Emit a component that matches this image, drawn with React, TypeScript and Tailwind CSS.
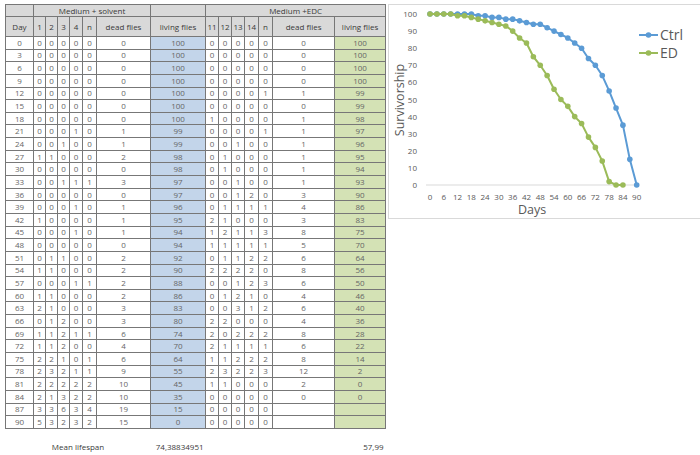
const rows = [
  '0 0 0 0 0 0 0 100 0 0 0 0 0 0 100',
  '3 0 0 0 0 0 0 100 0 0 0 0 0 0 100',
  '6 0 0 0 0 0 0 100 0 0 0 0 0 0 100',
  '9 0 0 0 0 0 0 100 0 0 0 0 0 0 100',
  '12 0 0 0 0 0 0 100 0 0 0 0 1 1 99',
  '15 0 0 0 0 0 0 100 0 0 0 0 0 0 99',
  '18 0 0 0 0 0 0 100 1 0 0 0 0 1 98',
  '21 0 0 0 1 0 1 99 0 0 0 0 1 1 97',
  '24 0 0 1 0 0 1 99 0 0 1 0 0 1 96',
  '27 1 1 0 0 0 2 98 0 1 0 0 0 1 95',
  '30 0 0 0 0 0 0 98 0 1 0 0 0 1 94',
  '33 0 0 1 1 1 3 97 0 0 1 0 0 1 93',
  '36 0 0 0 0 0 0 97 0 0 1 2 0 3 90',
  '39 0 0 0 1 0 1 96 0 1 1 1 1 4 86',
  '42 1 0 0 0 0 1 95 2 1 0 0 0 3 83',
  '45 0 0 0 1 0 1 94 1 2 1 1 3 8 75',
  '48 0 0 0 0 0 0 94 1 1 1 1 1 5 70',
  '51 0 1 1 0 0 2 92 0 1 1 2 2 6 64',
  '54 1 1 0 0 0 2 90 2 2 2 2 0 8 56',
  '57 0 0 0 1 1 2 88 0 0 1 2 3 6 50',
  '60 1 1 0 0 0 2 86 0 1 2 1 0 4 46',
  '63 2 1 0 0 0 3 83 0 0 3 1 2 6 40',
  '66 0 1 2 0 0 3 80 2 2 0 0 0 4 36',
  '69 1 1 2 1 1 6 74 2 0 2 2 2 8 28',
  '72 1 1 2 0 0 4 70 2 1 1 1 1 6 22',
  '75 2 2 1 0 1 6 64 1 1 2 2 2 8 14',
  '78 2 3 2 1 1 9 55 2 3 2 2 3 12 2',
  '81 2 2 2 2 2 10 45 1 1 0 0 0 2 0',
  '84 2 1 3 2 2 10 35 0 0 0 0 0 0 0',
  '87 3 3 6 3 4 19 15 0 0 0 0 0 - -',
  '90 5 3 2 3 2 15 0 0 0 0 0 0 - -',
].map((r) => r.split(' ').map((v) => (v === '-' ? '' : v)));

const ctrl = rows.map((r) => [Number(r[0]), Number(r[7])]);
const ed = rows.filter((r) => r[14] !== '').map((r) => [Number(r[0]), Number(r[14])]);

const px = (d: number) => 41 + d * 2.2967;
const py = (v: number) => 180 - v * 1.71;

const cell = 'border border-[#777777] p-0 text-center leading-none';
const head = `${cell} bg-[#d9d9d9] text-[#3a3a3a]`;

function Series({ data, color }: { data: number[][]; color: string }) {
  const pts = data.map(([d, v]) => `${px(d)},${py(v)}`).join(' ');
  return (
    <g>
      <polyline points={pts} fill="none" stroke={color} strokeWidth="2" strokeLinejoin="round" />
      {data.map(([d, v]) => (
        <circle key={d} cx={px(d)} cy={py(v)} r="2.8" fill={color} />
      ))}
    </g>
  );
}

function Chart() {
  return (
    <div className="ml-[2px] w-[313px] h-[215px] border border-[#d9d9d9] bg-white">
      <svg width="311" height="213" className="font-['Open_Sans',sans-serif]">
        {[0, 10, 20, 30, 40, 50, 60, 70, 80, 90, 100].map((v) => (
          <text key={v} x="28" y={py(v) + 3} textAnchor="end" fontSize="8" fill="#595959">
            {v}
          </text>
        ))}
        <line x1="37" y1="180" x2="250" y2="180" stroke="#d9d9d9" strokeWidth="1" />
        {[0, 6, 12, 18, 24, 30, 36, 42, 48, 54, 60, 66, 72, 78, 84, 90].map((d) => (
          <text key={d} x={px(d)} y="195" textAnchor="middle" fontSize="8" fill="#595959">
            {d}
          </text>
        ))}
        <text x="143" y="209" textAnchor="middle" fontSize="12.5" fill="#595959">
          Days
        </text>
        <text
          x="0"
          y="0"
          transform="translate(15 95) rotate(-90)"
          textAnchor="middle"
          fontSize="12.5"
          fill="#595959"
        >
          Survivorship
        </text>
        <Series data={ctrl} color="#5b9bd5" />
        <Series data={ed} color="#9bbb59" />
        <line x1="250" y1="30" x2="269" y2="30" stroke="#5b9bd5" strokeWidth="2" />
        <circle cx="259.5" cy="30" r="2.8" fill="#5b9bd5" />
        <text x="271" y="35" fontSize="14" fill="#595959">
          Ctrl
        </text>
        <line x1="250" y1="48" x2="269" y2="48" stroke="#9bbb59" strokeWidth="2" />
        <circle cx="259.5" cy="48" r="2.8" fill="#9bbb59" />
        <text x="271" y="53" fontSize="14" fill="#595959">
          ED
        </text>
      </svg>
    </div>
  );
}

export default function App() {
  const widths = [28, 12, 12, 12, 13, 14, 54, 55, 13, 13, 13, 14, 14, 62, 51];
  return (
    <div className="flex items-start pt-[4px] pl-[5px] bg-white w-[700px] h-[455px] font-['Open_Sans',sans-serif] text-[8px]">
      <table className="table-fixed border-collapse w-[380px]">
        <colgroup>
          {widths.map((w, i) => (
            <col key={i} style={{ width: w }} />
          ))}
        </colgroup>
        <tbody>
          <tr className="h-[12px]">
            <td className={head}></td>
            <td className={head} colSpan={6}>Medium + solvent</td>
            <td className={head}></td>
            <td className={head} colSpan={7}>Medium +EDC</td>
          </tr>
          <tr className="h-[20px]">
            {['Day', '1', '2', '3', '4', 'n', 'dead flies', 'living flies', '11', '12', '13', '14', 'n', 'dead flies', 'living flies'].map(
              (h, i) => (
                <td key={i} className={head}>
                  {h}
                </td>
              )
            )}
          </tr>
          {rows.map((r) => (
            <tr key={r[0]} className="h-[12.65px]">
              {r.map((v, i) => (
                <td
                  key={i}
                  className={`${cell} text-[#666666] ${i === 7 ? 'bg-[#c3d5ea]' : i === 14 ? 'bg-[#d4e2b5]' : 'bg-white'}`}
                >
                  {v}
                </td>
              ))}
            </tr>
          ))}
          <tr className="h-[13px]">
            <td colSpan={15}></td>
          </tr>
          <tr className="h-[12px] text-[#3a3a3a]">
            <td colSpan={7} className="p-0 text-center leading-none">
              Mean lifespan
            </td>
            <td className="p-0 pr-[2px] text-right leading-none">74,38834951</td>
            <td colSpan={6}></td>
            <td className="p-0 pr-[2px] text-right leading-none">57,99</td>
          </tr>
        </tbody>
      </table>
      <Chart />
    </div>
  );
}
